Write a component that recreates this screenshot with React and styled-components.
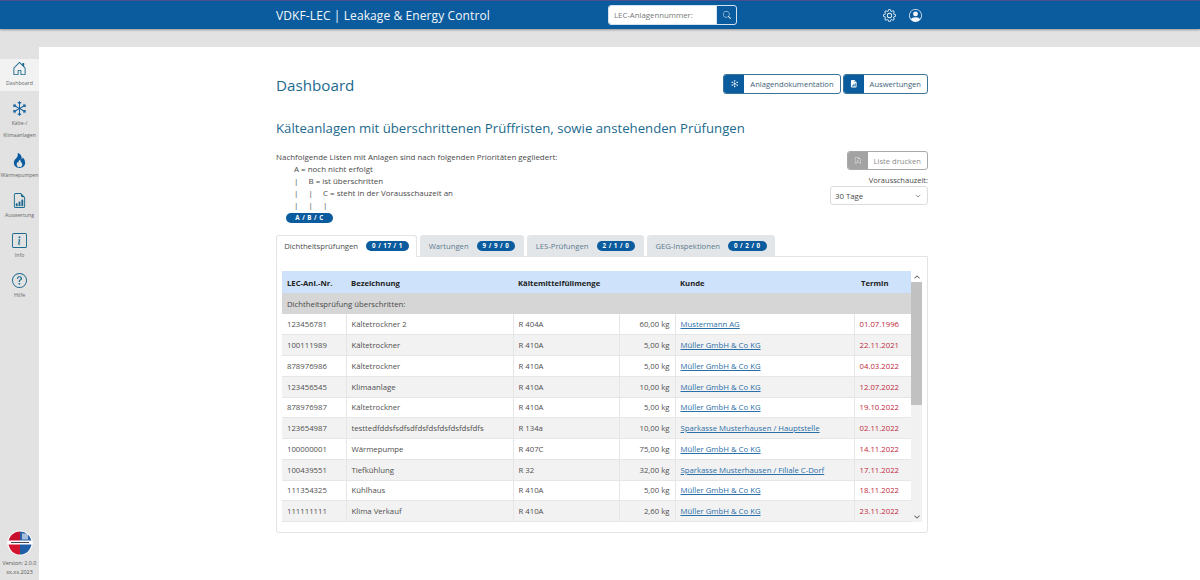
import React from "react";
import styled, { createGlobalStyle } from "styled-components";
import {
  BsHouseDoor,
  BsSnow,
  BsFire,
  BsFileEarmarkBarGraph,
  BsFileEarmarkBarGraphFill,
  BsInfoSquare,
  BsQuestionCircle,
  BsGear,
  BsPersonCircle,
  BsSearch,
  BsFileEarmarkPdf,
  BsChevronDown,
  BsChevronUp,
} from "react-icons/bs";

const BLUE = "#0b5c9e";
const TEAL = "#1c6a8e";

const rows = [
  ["123456781", "Kältetrockner 2", "R 404A", "60,00 kg", "Mustermann AG", "01.07.1996"],
  ["100111989", "Kältetrockner", "R 410A", "5,00 kg", "Müller GmbH & Co KG", "22.11.2021"],
  ["878976986", "Kältetrockner", "R 410A", "5,00 kg", "Müller GmbH & Co KG", "04.03.2022"],
  ["123456545", "Klimaanlage", "R 410A", "10,00 kg", "Müller GmbH & Co KG", "12.07.2022"],
  ["878976987", "Kältetrockner", "R 410A", "5,00 kg", "Müller GmbH & Co KG", "19.10.2022"],
  ["123654987", "testtedfddsfsdfsdfdsfdsfdsfdsfdsfdfs", "R 134a", "10,00 kg", "Sparkasse Musterhausen / Hauptstelle", "02.11.2022"],
  ["100000001", "Wärmepumpe", "R 407C", "75,00 kg", "Müller GmbH & Co KG", "14.11.2022"],
  ["100439551", "Tiefkühlung", "R 32", "32,00 kg", "Sparkasse Musterhausen / Filiale C-Dorf", "17.11.2022"],
  ["111354325", "Kühlhaus", "R 410A", "5,00 kg", "Müller GmbH & Co KG", "18.11.2022"],
  ["111111111", "Klima Verkauf", "R 410A", "2,60 kg", "Müller GmbH & Co KG", "23.11.2022"],
];

const navItems = [
  { icon: <BsHouseDoor />, label: "Dashboard", active: true },
  { icon: <BsSnow />, label: "Kälte-/ Klimaanlagen", dark: true },
  { icon: <BsFire />, label: "Wärmepumpen", dark: true },
  { icon: <BsFileEarmarkBarGraph />, label: "Auswertung" },
  { icon: <BsInfoSquare />, label: "Info" },
  { icon: <BsQuestionCircle />, label: "Hilfe" },
];

const tabs = [
  { label: "Dichtheitsprüfungen", count: "0 / 17 / 1", width: 141, active: true },
  { label: "Wartungen", count: "9 / 9 / 0", width: 104 },
  { label: "LES-Prüfungen", count: "2 / 1 / 0", width: 117 },
  { label: "GEG-Inspektionen", count: "0 / 2 / 0", width: 128 },
];

const App = () => {
  return (
    <>
      <GlobalStyle />
      <Page>
        <TopBar>
          <BarInner>
            <BrandTitle>VDKF-LEC | Leakage &amp; Energy Control</BrandTitle>
            <SearchGroup>
              <SearchInput>LEC-Anlagennummer:</SearchInput>
              <SearchButton>
                <BsSearch />
              </SearchButton>
            </SearchGroup>
            <TopIcons>
              <BsGear />
              <BsPersonCircle />
            </TopIcons>
          </BarInner>
        </TopBar>
        <Body>
          <Sidebar>
            <Nav>
              {navItems.map((item) => (
                <NavItem key={item.label} $active={item.active}>
                  <NavIcon $dark={item.dark}>{item.icon}</NavIcon>
                  <NavLabel>{item.label}</NavLabel>
                </NavItem>
              ))}
            </Nav>
            <SideFooter>
              <svg width="26" height="26" viewBox="0 0 26 26">
                <circle cx="13" cy="13" r="12.5" fill="#fff" />
                <path d="M13 1.5A11.5 11.5 0 0 0 1.5 13H13Z" fill="#c8102e" />
                <path d="M13 1.5A11.5 11.5 0 0 1 24.5 13H13Z" fill="#2a63a8" />
                <path d="M13 24.5A11.5 11.5 0 0 1 1.5 13H13Z" fill="#d4152f" />
                <path d="M13 24.5A11.5 11.5 0 0 0 24.5 13H13Z" fill="#1f5fa8" />
                <rect x="0.5" y="10.5" width="25" height="4" fill="#fff" />
                <rect x="15" y="3.5" width="6" height="6" fill="#fff" opacity="0.6" />
                <rect x="4" y="12" width="18" height="1" fill="#445" />
              </svg>
              <VersionText>
                Version: 2.0.0
                <br />
                xx.xx.2023
              </VersionText>
            </SideFooter>
          </Sidebar>
          <Main>
            <Content>
              <TitleRow>
                <PageTitle>Dashboard</PageTitle>
                <ButtonRow>
                  <IconButton>
                    <ButtonIcon>
                      <BsSnow />
                    </ButtonIcon>
                    <ButtonText>Anlagendokumentation</ButtonText>
                  </IconButton>
                  <IconButton>
                    <ButtonIcon>
                      <BsFileEarmarkBarGraphFill />
                    </ButtonIcon>
                    <ButtonText>Auswertungen</ButtonText>
                  </IconButton>
                </ButtonRow>
              </TitleRow>

              <SectionTitle>Kälteanlagen mit überschrittenen Prüffristen, sowie anstehenden Prüfungen</SectionTitle>

              <InfoRow>
                <Legend>
                  <div>Nachfolgende Listen mit Anlagen sind nach folgenden Prioritäten gegliedert:</div>
                  <LegendLine>A = noch nicht erfolgt</LegendLine>
                  <LegendLine>
                    <Pipe>|</Pipe>B = ist überschritten
                  </LegendLine>
                  <LegendLine>
                    <Pipe>|</Pipe>
                    <Pipe>|</Pipe>C = steht in der Vorausschauzeit an
                  </LegendLine>
                  <LegendLine>
                    <Pipe>|</Pipe>
                    <Pipe>|</Pipe>
                    <Pipe>|</Pipe>
                  </LegendLine>
                  <LegendBadge>A / B / C</LegendBadge>
                </Legend>
                <Controls>
                  <IconButton $disabled>
                    <ButtonIcon $disabled>
                      <BsFileEarmarkPdf />
                    </ButtonIcon>
                    <ButtonText $disabled>Liste drucken</ButtonText>
                  </IconButton>
                  <SelectLabel>Vorausschauzeit:</SelectLabel>
                  <SelectBox>
                    30 Tage
                    <BsChevronDown />
                  </SelectBox>
                </Controls>
              </InfoRow>

              <TabBar>
                {tabs.map((tab) => (
                  <Tab key={tab.label} $active={tab.active} $width={tab.width}>
                    {tab.label}
                    <Badge>{tab.count}</Badge>
                  </Tab>
                ))}
              </TabBar>
              <Panel>
                <TableFrame>
                  <TableClip>
                    <Table>
                      <colgroup>
                        <col width="64" />
                        <col width="167" />
                        <col width="106" />
                        <col width="56" />
                        <col width="179" />
                        <col width="57" />
                      </colgroup>
                      <thead>
                        <tr>
                          <Th>LEC-Anl.-Nr.</Th>
                          <Th>Bezeichnung</Th>
                          <Th colSpan={2}>Kältemittelfüllmenge</Th>
                          <Th>Kunde</Th>
                          <Th>Termin</Th>
                        </tr>
                      </thead>
                      <tbody>
                        <tr>
                          <GroupCell colSpan={6}>Dichtheitsprüfung überschritten:</GroupCell>
                        </tr>
                        {rows.map((row, i) => (
                          <Row key={row[0]} $odd={i % 2 === 1}>
                            <Td>{row[0]}</Td>
                            <Td>{row[1]}</Td>
                            <Td>{row[2]}</Td>
                            <Td $right>{row[3]}</Td>
                            <Td>
                              <CustomerLink>{row[4]}</CustomerLink>
                            </Td>
                            <Td $red>{row[5]}</Td>
                          </Row>
                        ))}
                        <Row>
                          <Td />
                          <Td />
                          <Td />
                          <Td />
                          <Td />
                          <Td />
                        </Row>
                      </tbody>
                    </Table>
                  </TableClip>
                  <ScrollBar>
                    <ScrollArrow>
                      <BsChevronUp />
                    </ScrollArrow>
                    <ScrollThumb />
                    <ScrollArrow $bottom>
                      <BsChevronDown />
                    </ScrollArrow>
                  </ScrollBar>
                </TableFrame>
              </Panel>
            </Content>
          </Main>
        </Body>
      </Page>
    </>
  );
};

const GlobalStyle = createGlobalStyle`
  html, body {
    margin: 0;
    padding: 0;
    background: #e2e2e2;
  }
  * {
    box-sizing: border-box;
  }
  body {
    font-family: "Open Sans", "Noto Sans", sans-serif;
    font-size: 8px;
    color: #444;
  }
`;

const Page = styled.div`
  width: 1200px;
  height: 580px;
  display: flex;
  flex-direction: column;
  overflow: hidden;
`;

const TopBar = styled.header`
  height: 29px;
  flex: none;
  background: ${BLUE};
  border-top: 1px solid #4b4f8e;
  box-shadow: 0 1px 2px rgba(0, 0, 0, 0.35);
  position: relative;
  z-index: 2;
`;

const BarInner = styled.div`
  height: 28px;
  padding-left: 276px;
  display: flex;
  align-items: center;
`;

const BrandTitle = styled.div`
  width: 332px;
  color: #f4f7fa;
  font-size: 12px;
  letter-spacing: 0.1px;
  white-space: nowrap;
`;

const SearchGroup = styled.div`
  width: 129px;
  height: 20px;
  display: flex;
  border: 1px solid #d5e3ee;
  border-radius: 3px;
  overflow: hidden;
`;

const SearchInput = styled.div`
  flex: 1;
  background: #fff;
  color: #777;
  font-size: 7.8px;
  line-height: 18px;
  padding-left: 5px;
`;

const SearchButton = styled.div`
  width: 20px;
  display: flex;
  align-items: center;
  justify-content: center;
  border-left: 1px solid #d5e3ee;
  color: #e8f0f6;
  font-size: 8px;
`;

const TopIcons = styled.div`
  margin-left: 146px;
  display: flex;
  gap: 13px;
  color: #f4f7fa;
  font-size: 13px;
  align-items: center;
`;

const Body = styled.div`
  flex: 1;
  display: flex;
  min-height: 0;
`;

const Sidebar = styled.aside`
  width: 39px;
  flex: none;
  padding-top: 30px;
  display: flex;
  flex-direction: column;
  justify-content: space-between;
  background: #e2e2e2;
`;

const Nav = styled.nav`
  display: flex;
  flex-direction: column;
  gap: 8px;
`;

const NavItem = styled.div`
  padding: 1px 0 2px;
  display: flex;
  flex-direction: column;
  align-items: center;
  background: ${(props) => (props.$active ? "#f2f2f2" : "transparent")};
`;

const NavIcon = styled.div`
  font-size: 15px;
  height: 16px;
  display: flex;
  align-items: center;
  color: ${(props) => (props.$dark ? BLUE : TEAL)};
  margin-bottom: 1px;
`;

const NavLabel = styled.div`
  font-size: 5.2px;
  line-height: 12px;
  text-align: center;
  color: #666;
  width: 39px;
`;

const SideFooter = styled.div`
  display: flex;
  flex-direction: column;
  align-items: center;
  padding-bottom: 3px;
  gap: 3px;
`;

const VersionText = styled.div`
  font-size: 5.4px;
  line-height: 9px;
  text-align: center;
  color: #555;
  white-space: nowrap;
`;

const Main = styled.main`
  flex: 1;
  margin-top: 18px;
  background: #fff;
  padding: 27px 0 0 237px;
`;

const Content = styled.div`
  width: 652px;
`;

const TitleRow = styled.div`
  display: flex;
  justify-content: space-between;
  align-items: center;
  height: 20px;
`;

const PageTitle = styled.h1`
  margin: 1px 0 0;
  font-size: 15.2px;
  font-weight: 400;
  color: ${TEAL};
`;

const ButtonRow = styled.div`
  display: flex;
  gap: 2px;
`;

const IconButton = styled.div`
  height: ${(props) => (props.$disabled ? "19px" : "20px")};
  display: inline-flex;
  border: 1px solid ${(props) => (props.$disabled ? "#a9a9a9" : "#3a7396")};
  border-radius: 3px;
  overflow: hidden;
  background: #fff;
`;

const ButtonIcon = styled.div`
  width: 20px;
  display: flex;
  align-items: center;
  justify-content: center;
  font-size: 7.5px;
  color: ${(props) => (props.$disabled ? "#e8e8e8" : "#fff")};
  background: ${(props) => (props.$disabled ? "#a3a3a3" : BLUE)};
`;

const ButtonText = styled.div`
  padding: 0 6px;
  font-size: 7.6px;
  display: flex;
  align-items: center;
  white-space: nowrap;
  color: ${(props) => (props.$disabled ? "#8b8b8b" : "#41617a")};
`;

const SectionTitle = styled.h2`
  margin: 24px 0 0;
  font-size: 13.2px;
  line-height: 20px;
  font-weight: 400;
  color: ${TEAL};
  white-space: nowrap;
`;

const InfoRow = styled.div`
  margin-top: 13px;
  height: 84px;
  display: flex;
  justify-content: space-between;
  align-items: flex-start;
`;

const Legend = styled.div`
  font-size: 7.95px;
  line-height: 12px;
  color: #4a4a4a;
  white-space: nowrap;
`;

const LegendLine = styled.div`
  padding-left: 18px;
  min-height: 12px;
`;

const Pipe = styled.span`
  display: inline-block;
  width: 14.5px;
`;

const Badge = styled.span`
  display: inline-block;
  padding: 0 6px;
  height: 10px;
  line-height: 10px;
  border-radius: 5px;
  background: ${BLUE};
  color: #fff;
  font-size: 6.2px;
  font-weight: 700;
  letter-spacing: 0.5px;
  white-space: pre;
`;

const LegendBadge = styled(Badge)`
  display: block;
  width: 47px;
  margin: 2px 0 0 10px;
  text-align: center;
`;

const Controls = styled.div`
  display: flex;
  flex-direction: column;
  align-items: flex-end;
`;

const SelectLabel = styled.div`
  margin-top: 5px;
  font-size: 7.5px;
  line-height: 11px;
  color: #4a4a4a;
`;

const SelectBox = styled.div`
  width: 98px;
  height: 19px;
  padding: 0 6px 0 4px;
  border: 1px solid #dcdcdc;
  border-radius: 3px;
  font-size: 7.8px;
  color: #4a4a4a;
  display: flex;
  align-items: center;
  justify-content: space-between;

  svg {
    font-size: 6px;
  }
`;

const TabBar = styled.div`
  display: flex;
  gap: 3px;
  height: 21px;
`;

const Tab = styled.div`
  width: ${(props) => props.$width}px;
  height: ${(props) => (props.$active ? "22px" : "21px")};
  display: flex;
  align-items: center;
  justify-content: center;
  gap: 8px;
  font-size: 7.7px;
  white-space: nowrap;
  border-radius: 3px 3px 0 0;
  border: 1px solid ${(props) => (props.$active ? "#e3e3e3" : "#e3e6e8")};
  border-bottom-color: ${(props) => (props.$active ? "#fff" : "#e3e6e8")};
  background: ${(props) => (props.$active ? "#fff" : "#e3e6e8")};
  color: ${(props) => (props.$active ? "#4a4a4a" : "#5b7a90")};
  position: relative;
  z-index: 1;
`;

const Panel = styled.div`
  height: 277px;
  padding: 14px 5px 0;
  border: 1px solid #e3e3e3;
  border-radius: 0 0 3px 3px;
`;

const TableFrame = styled.div`
  height: 251px;
  display: flex;
`;

const TableClip = styled.div`
  width: 629px;
  overflow: hidden;
`;

const Table = styled.table`
  width: 629px;
  table-layout: fixed;
  border-collapse: collapse;
  font-size: 7.75px;
`;

const Th = styled.th`
  height: 22px;
  padding: 1px 5px 0;
  text-align: left;
  font-size: 7.7px;
  font-weight: 700;
  color: #222;
  background: #cfe2fb;

  &:last-child {
    padding-left: 7px;
  }
`;

const GroupCell = styled.td`
  height: 21px;
  padding: 0 5px;
  background: #d6d6d6;
  color: #4a4a4a;
`;

const Row = styled.tr`
  height: 20.75px;
  background: ${(props) => (props.$odd ? "#f2f2f2" : "#fff")};
`;

const Td = styled.td`
  padding: 0 5px;
  white-space: nowrap;
  overflow: hidden;
  border-right: 1px solid #e6e6e6;
  border-bottom: 1px solid #e6e6e6;
  color: ${(props) => (props.$red ? "#c0283a" : "#4f4f4f")};
  text-align: ${(props) => (props.$right ? "right" : "left")};

  &:last-child {
    border-right: none;
  }
`;

const CustomerLink = styled.span`
  color: #2a6fa8;
  text-decoration: underline;
`;

const ScrollBar = styled.div`
  width: 11px;
  display: flex;
  flex-direction: column;
  background: #f1f1f1;
`;

const ScrollArrow = styled.div`
  height: 11px;
  flex: none;
  display: flex;
  align-items: center;
  justify-content: center;
  font-size: 6px;
  color: #505050;
  margin-top: ${(props) => (props.$bottom ? "auto" : "0")};
  background: ${(props) => (props.$bottom ? "#f1f1f1" : "#fff")};

  svg {
    stroke: currentColor;
    stroke-width: 1.2px;
  }
`;

const ScrollThumb = styled.div`
  height: 123px;
  background: #c1c1c1;
`;

export default App;
